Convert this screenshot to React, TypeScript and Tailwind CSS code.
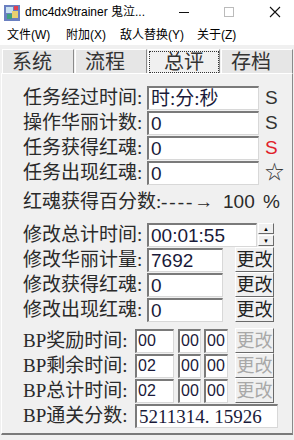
import React from "react";

const serif = { fontFamily: '"Liberation Serif", "Noto Sans CJK SC", serif' };
const sans = { fontFamily: '"Liberation Sans", "Noto Sans CJK SC", sans-serif' };

function Field({ w, value, mono, small }: { w: string; value: string; mono?: boolean; small?: boolean }) {
  return (
    <div
      className={`${w} h-[24px] shrink-0 bg-white border-t-2 border-l-2 border-b border-r border-t-[#7a7a7a] border-l-[#7a7a7a] border-b-[#d8d8d8] border-r-[#d8d8d8] flex items-center ${small ? "text-[16px] pl-[1px]" : "text-[19px] pl-[2px]"} leading-none text-[#1a1a3a] overflow-hidden whitespace-nowrap`}
      style={mono ? serif : sans}
    >
      {value}
    </div>
  );
}

function Btn({ disabled }: { disabled?: boolean }) {
  return (
    <div
      className={`w-[39px] h-[25px] shrink-0 bg-[#f0f0f0] border border-t-white border-l-white border-b-[#6a6a6a] border-r-[#6a6a6a] flex items-center justify-center text-[18px] leading-none whitespace-nowrap ${disabled ? "text-[#a8a8a8]" : "text-[#222]"}`}
      style={serif}
    >
      更改
    </div>
  );
}

function Label({ text, w = "w-[124px]" }: { text: string; w?: string }) {
  return (
    <div className={`${w} shrink-0 text-[19px] leading-none text-[#2a2a2a] whitespace-nowrap`} style={serif}>
      {text}
    </div>
  );
}

function StatRow({ label, value, mark, red }: { label: string; value: string; mark: string; red?: boolean }) {
  return (
    <div className="flex items-center h-[25px]">
      <Label text={label} />
      <Field w="w-[112px]" value={value} mono={value.includes("时")} />
      <span className={`ml-[6px] text-[19px] leading-none ${red ? "text-[#e0202a]" : "text-[#333]"}`} style={sans}>
        {mark}
      </span>
    </div>
  );
}

function EditRow({ label, value }: { label: string; value: string }) {
  return (
    <div className="flex items-center h-[25px]">
      <Label text={label} />
      <Field w="w-[76px]" value={value} />
      <div className="ml-[12px]">
        <Btn />
      </div>
    </div>
  );
}

function BpRow({ label, a, b, c }: { label: string; a: string; b: string; c: string }) {
  return (
    <div className="flex items-center h-[25px]">
      <Label text={label} w="w-[112px]" />
      <Field w="w-[39px]" value={a} small />
      <div className="w-[4px]" />
      <Field w="w-[23px]" value={b} small />
      <div className="w-[3px]" />
      <Field w="w-[24px]" value={c} small />
      <div className="ml-[7px]">
        <Btn disabled />
      </div>
    </div>
  );
}

export default function App() {
  const tabs = ["系统", "流程", "总评", "存档"];
  return (
    <div className="w-[294px] h-[440px] bg-[#f0f0f0] overflow-hidden">
      {/* title bar */}
      <div className="h-[24px] bg-white flex items-center text-[12px] text-black whitespace-nowrap" style={sans}>
        <svg width="16" height="16" viewBox="0 0 16 16" className="ml-[4px] mt-[2px]">
          <rect x="0" y="0" width="16" height="16" fill="#6a7fc0" />
          <rect x="2" y="2" width="7" height="6" fill="#c8e0f0" />
          <rect x="8" y="6" width="6" height="7" fill="#e8d070" />
          <rect x="3" y="9" width="5" height="5" fill="#40a080" />
          <rect x="10" y="1" width="4" height="4" fill="#e04050" />
        </svg>
        <span className="ml-[5px]">dmc4dx9trainer 鬼泣...</span>
        <div className="ml-auto flex items-center">
          <svg width="12" height="12" viewBox="0 0 12 12" className="mr-[33px]">
            <line x1="1" y1="6.5" x2="11" y2="6.5" stroke="#111" strokeWidth="1" />
          </svg>
          <svg width="12" height="12" viewBox="0 0 12 12" className="mr-[34px]">
            <rect x="1.5" y="1.5" width="9" height="9" fill="none" stroke="#bbb" strokeWidth="1" />
          </svg>
          <svg width="12" height="12" viewBox="0 0 12 12" className="mr-[13px]">
            <path d="M1 1 L11 11 M11 1 L1 11" stroke="#111" strokeWidth="1.1" />
          </svg>
        </div>
      </div>
      {/* menu bar */}
      <div className="h-[21px] bg-white flex items-center text-[12px] text-black whitespace-nowrap" style={sans}>
        <span className="ml-[7px] w-[59px]">文件(W)</span>
        <span className="w-[54px]">附加(X)</span>
        <span className="w-[77px]">敌人替换(Y)</span>
        <span>关于(Z)</span>
      </div>
      {/* tabs */}
      <div className="flex pl-[2px] pt-[4px] h-[28px]">
        {tabs.map((t, i) => (
          <div
            key={t}
            className={`w-[72px] h-[24px] mr-[1px] shrink-0 border-t border-l border-r border-t-white border-l-white border-r-[#8a8a8a] flex items-center pl-[9px] text-[20px] leading-none text-[#333] whitespace-nowrap ${
              i === 2 ? "bg-[#f0f0f0]" : "bg-[#e6e6e6]"
            }`}
            style={serif}
          >
            {i === 2 ? (
              <span className="-ml-[9px] w-[70px] h-[22px] flex items-center pl-[14px] border border-dotted border-[#333]">{t}</span>
            ) : (
              <span>{t}</span>
            )}
          </div>
        ))}
      </div>
      {/* panel */}
      <div className="mx-[1px] h-[362px] border border-t-white border-l-white border-r-[#8a8a8a] border-b-2 border-b-[#7a7a7a] pl-[21px] pt-[11px]">
        <StatRow label="任务经过时间:" value="时:分:秒" mark="S" />
        <StatRow label="操作华丽计数:" value="0" mark="S" />
        <StatRow label="任务获得红魂:" value="0" mark="S" red />
        <StatRow label="任务出现红魂:" value="0" mark="☆" />
        <div className="flex items-center h-[32px] text-[19px] leading-none text-[#2a2a2a] whitespace-nowrap" style={serif}>
          <span className="w-[138px] shrink-0">红魂获得百分数:</span>
          <span className="w-[62px] shrink-0 tracking-[2px]">----→</span>
          <span className="w-[40px] shrink-0" style={sans}>100</span>
          <span style={sans}>%</span>
        </div>
        <div className="flex items-center h-[25px] mt-[5px]">
          <Label text="修改总计时间:" />
          <Field w="w-[110px]" value="00:01:55" />
          <div className="ml-[1px] flex flex-col gap-[1px]">
            {["▲", "▼"].map((s) => (
              <div
                key={s}
                className="w-[16px] h-[11px] bg-[#f0f0f0] border border-t-white border-l-white border-b-[#6a6a6a] border-r-[#6a6a6a] flex items-center justify-center text-[6px] leading-none text-black"
              >
                {s}
              </div>
            ))}
          </div>
        </div>
        <EditRow label="修改华丽计量:" value="7692" />
        <EditRow label="修改获得红魂:" value="0" />
        <EditRow label="修改出现红魂:" value="0" />
        <div className="h-[6px]" />
        <BpRow label="BP奖励时间:" a="00" b="00" c="00" />
        <BpRow label="BP剩余时间:" a="02" b="00" c="00" />
        <BpRow label="BP总计时间:" a="02" b="00" c="00" />
        <div className="flex items-center h-[25px]">
          <Label text="BP通关分数:" w="w-[112px]" />
          <Field w="w-[143px]" value="5211314. 15926" mono />
        </div>
      </div>
    </div>
  );
}
